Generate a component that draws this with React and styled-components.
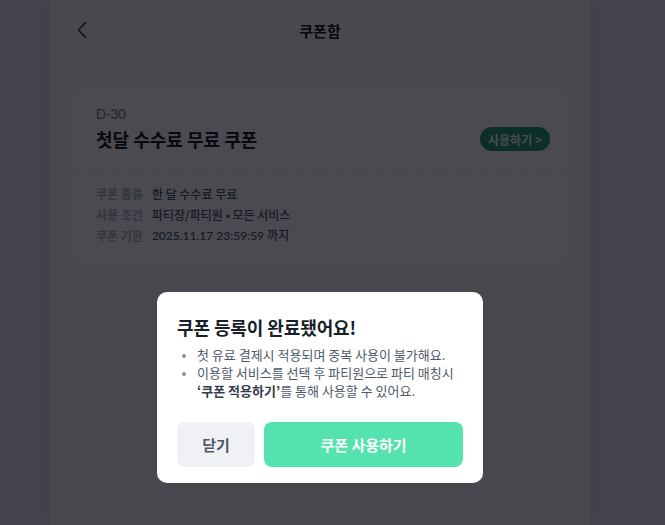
import React from "react";
import styled, { createGlobalStyle } from "styled-components";

const Global = createGlobalStyle`
  html, body { margin: 0; padding: 0; }
  body {
    background: #e8e9ed;
    font-family: "Noto Sans CJK KR", "Noto Sans", sans-serif;
    color: #191f28;
  }
  * { box-sizing: border-box; }
`;

const Page = styled.div`
  width: 640px;
  height: 525px;
  display: flex;
  justify-content: center;
`;

const Panel = styled.div`
  width: 540px;
  height: 525px;
  background: #f9fafb;
  box-shadow: 0 0 12px rgba(0, 0, 0, 0.06);
  display: flex;
  flex-direction: column;
`;

const Header = styled.header`
  height: 60px;
  display: grid;
  grid-template-columns: 60px 1fr 60px;
  align-items: center;
`;

const BackButton = styled.button`
  border: 0;
  background: none;
  padding: 0 0 0 26px;
  display: flex;
  align-items: center;
  color: #333d4b;
`;

const HeaderTitle = styled.h1`
  margin: 0;
  text-align: center;
  font-size: 15px;
  font-weight: 700;
  color: #191f28;
`;

const Body = styled.main`
  padding: 27px 22px 0;
`;

const Card = styled.section`
  background: #ffffff;
  border-radius: 14px;
`;

const CardTop = styled.div`
  padding: 18px 18px 17px 24px;
  border-bottom: 1px dashed #e5e8eb;
  display: flex;
  align-items: flex-end;
  justify-content: space-between;
`;

const Dday = styled.div`
  font-family: "Lato", "Noto Sans CJK KR", sans-serif;
  font-size: 13px;
  line-height: 18px;
  color: #6b7684;
`;

const CardTitle = styled.h2`
  margin: 3px 0 0;
  font-size: 18px;
  line-height: 26px;
  font-weight: 700;
  color: #191f28;
`;

const UseButton = styled.button`
  height: 24px;
  width: 70px;
  border: 0;
  border-radius: 12px;
  background: #26a070;
  color: #ffffff;
  font-family: inherit;
  font-size: 12px;
  font-weight: 700;
  margin-bottom: 1px;
  padding: 0;
`;

const InfoGrid = styled.dl`
  margin: 0;
  padding: 15px 24px 20px;
  display: grid;
  grid-template-columns: auto 1fr;
  column-gap: 9px;
  row-gap: 3px;
  font-size: 12px;
  line-height: 18px;
`;

const InfoLabel = styled.dt`
  color: #b0b8c1;
  font-weight: 700;
`;

const InfoValue = styled.dd`
  margin: 0;
  color: #4e5968;
  font-weight: 500;
  font-family: ${(p) => (p.$latin ? '"Lato", "Noto Sans CJK KR", sans-serif' : "inherit")};
`;

const DimBackdrop = styled.div`
  position: fixed;
  inset: 0;
  background: rgba(0, 0, 8, 0.71);
`;

const Layer = styled.div`
  position: fixed;
  left: 0;
  top: 0;
  width: 640px;
  height: 525px;
  display: flex;
  justify-content: center;
  align-items: flex-end;
  padding-bottom: 42px;
`;

const Modal = styled.div`
  width: 326px;
  background: #ffffff;
  border-radius: 10px;
  padding: 23px 20px 16px 20px;
`;

const ModalTitle = styled.h3`
  margin: 0;
  font-size: 18px;
  line-height: 24px;
  font-weight: 700;
  letter-spacing: -0.1px;
  color: #191f28;
`;

const Bullets = styled.ul`
  margin: 7px 0 0;
  padding: 0 0 0 20px;
  font-size: 13px;
  line-height: 18px;
  color: #4e5968;
  li::marker { color: #8b95a1; font-size: 11px; }
`;

const Strong = styled.strong`
  color: #333d4b;
  font-weight: 700;
`;

const Actions = styled.div`
  margin-top: 22px;
  display: grid;
  grid-template-columns: 78px 1fr;
  gap: 9px;
`;

const ActionButton = styled.button`
  height: 45px;
  border: 0;
  border-radius: 8px;
  font-family: inherit;
  font-size: 15px;
  font-weight: 700;
  background: ${(p) => (p.$primary ? "#54e3ae" : "#f0f1f5")};
  color: ${(p) => (p.$primary ? "#ffffff" : "#4e5968")};
`;

export default function App() {
  return (
    <>
      <Global />
      <Page>
        <Panel>
          <Header>
            <BackButton aria-label="뒤로">
              <svg width="12" height="18" viewBox="0 0 12 18" fill="none">
                <path d="M9.5 1.5 L2.5 9 L9.5 16.5" stroke="currentColor" strokeWidth="1.6" strokeLinecap="round" strokeLinejoin="round" />
              </svg>
            </BackButton>
            <HeaderTitle>쿠폰함</HeaderTitle>
            <span />
          </Header>
          <Body>
            <Card>
              <CardTop>
                <div>
                  <Dday>D-30</Dday>
                  <CardTitle>첫달 수수료 무료 쿠폰</CardTitle>
                </div>
                <UseButton>사용하기 &gt;</UseButton>
              </CardTop>
              <InfoGrid>
                <InfoLabel>쿠폰 종류</InfoLabel>
                <InfoValue>한 달 수수료 무료</InfoValue>
                <InfoLabel>사용 조건</InfoLabel>
                <InfoValue>파티장/파티원 • 모든 서비스</InfoValue>
                <InfoLabel>쿠폰 기한</InfoLabel>
                <InfoValue $latin>2025.11.17 23:59:59 까지</InfoValue>
              </InfoGrid>
            </Card>
          </Body>
        </Panel>
      </Page>
      <DimBackdrop />
      <Layer>
        <Modal>
          <ModalTitle>쿠폰 등록이 완료됐어요!</ModalTitle>
          <Bullets>
            <li>첫 유료 결제시 적용되며 중복 사용이 불가해요.</li>
            <li>
              이용할 서비스를 선택 후 파티원으로 파티 매칭시{" "}
              <Strong>‘쿠폰 적용하기’</Strong>를 통해 사용할 수 있어요.
            </li>
          </Bullets>
          <Actions>
            <ActionButton>닫기</ActionButton>
            <ActionButton $primary>쿠폰 사용하기</ActionButton>
          </Actions>
        </Modal>
      </Layer>
    </>
  );
}
